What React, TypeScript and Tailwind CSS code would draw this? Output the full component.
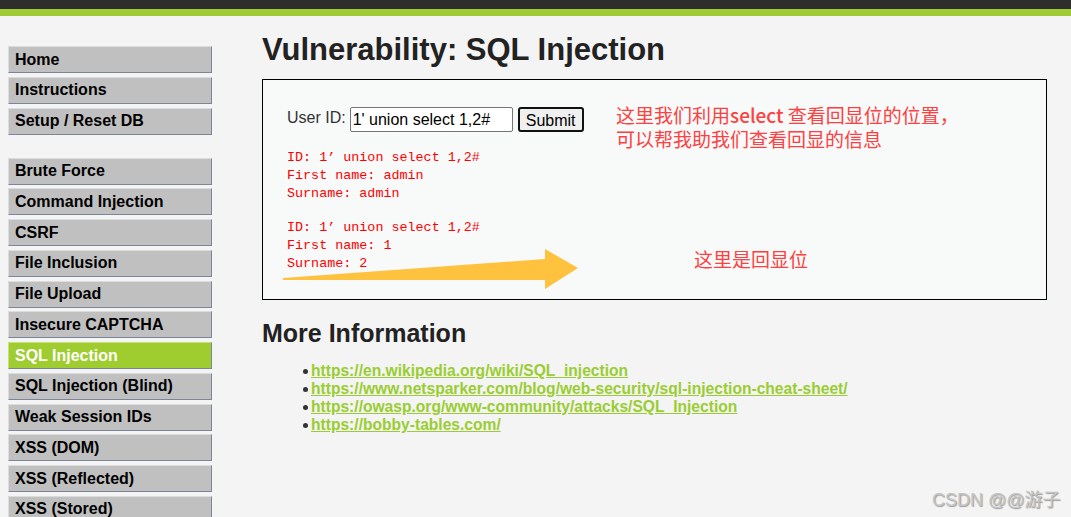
const menuTop = ["Home", "Instructions", "Setup / Reset DB"];
const menuVulns = [
  "Brute Force",
  "Command Injection",
  "CSRF",
  "File Inclusion",
  "File Upload",
  "Insecure CAPTCHA",
  "SQL Injection",
  "SQL Injection (Blind)",
  "Weak Session IDs",
  "XSS (DOM)",
  "XSS (Reflected)",
  "XSS (Stored)",
];

const links = [
  "https://en.wikipedia.org/wiki/SQL_injection",
  "https://www.netsparker.com/blog/web-security/sql-injection-cheat-sheet/",
  "https://owasp.org/www-community/attacks/SQL_Injection",
  "https://bobby-tables.com/",
];

function MenuItem({ label }: { label: string }) {
  const active = label === "SQL Injection";
  return (
    <li
      className={
        active
          ? "h-[27px] mb-[3.75px] pl-[6px] flex items-center border border-t-[#c7e07a] border-l-[#c7e07a] border-b-[#7b8698] border-r-[#7b8698] bg-[#9fcd30] text-white text-[16px] font-bold"
          : "h-[27px] mb-[3.75px] pl-[6px] flex items-center border border-t-[#dcdcdc] border-l-[#dcdcdc] border-b-[#7b8698] border-r-[#7b8698] bg-[#c0c0c0] text-black text-[16px] font-bold"
      }
    >
      {label}
    </li>
  );
}

function Result({ first, last }: { first: string; last: string }) {
  return (
    <pre className="text-[#ff0000] text-[13.4px] leading-[18px] font-['Liberation_Mono','Noto_Sans_CJK_SC',monospace]">
      {"ID: 1’ union select 1,2#\n"}
      {"First name: " + first + "\n"}
      {"Surname: " + last}
    </pre>
  );
}

export default function App() {
  return (
    <div className="relative h-[517px] w-[1071px] overflow-hidden bg-[#f4f4f4] font-['Liberation_Sans',Arial,sans-serif]">
      <div className="h-[9px] bg-[#2e2e2e]" />
      <div className="h-[7px] bg-[#9fcb34]" />

      <div className="flex">
        <div className="w-[212px] pl-[8px] pt-[30px]">
          <ul>
            {menuTop.map((m) => (
              <MenuItem key={m} label={m} />
            ))}
          </ul>
          <ul className="mt-[23px]">
            {menuVulns.map((m) => (
              <MenuItem key={m} label={m} />
            ))}
          </ul>
        </div>

        <div className="ml-[50px] w-[785px]">
          <h1 className="mt-[16px] text-[31px] leading-[36px] font-bold text-[#222]">
            Vulnerability: SQL Injection
          </h1>

          <div className="relative mt-[11px] h-[221px] border border-black bg-[#f8f9f9] pl-[24px] pt-[27px]">
            <div className="flex items-center gap-[4px] text-[16px]">
              <span className="text-[#333] -mt-[3px]">User ID:</span>
              <input
                readOnly
                value="1' union select 1,2#"
                className="h-[25px] w-[163px] rounded-[2px] border border-[#767676] bg-white px-[2px] text-[16px] text-black"
              />
              <button className="ml-[1px] h-[25px] w-[66px] rounded-[3px] border-2 border-[#111] bg-[#efefef] text-[16px] text-black">
                Submit
              </button>
            </div>
            <div className="mt-[17px]">
              <Result first="admin" last="admin" />
            </div>
            <div className="mt-[16px]">
              <Result first="1" last="2" />
            </div>

            <div className="absolute left-[353px] top-[23px] text-[19px] leading-[24px] text-[#ff4040] font-['Noto_Sans_CJK_SC',sans-serif]">
              <p>这里我们利用<span className="font-medium">select</span> 查看回显位的位置，</p>
              <p>可以帮我助我们查看回显的信息</p>
            </div>
            <div className="absolute left-[431px] top-[167px] text-[19px] leading-[24px] text-[#ff4040] font-['Noto_Sans_CJK_SC',sans-serif]">
              这里是回显位
            </div>

            <svg className="absolute left-[20px] top-[167px]" width="300" height="45" viewBox="0 0 300 45">
              <polygon points="0,31 262,12 262,2 295,21 262,42 262,33 0,33" fill="#ffc23f" />
            </svg>
          </div>

          <h2 className="mt-[18px] text-[25px] leading-[30px] font-bold text-[#222]">More Information</h2>
          <ul className="mt-[14px] ml-[41px] text-[15.6px] leading-[18px] font-bold">
            {links.map((l) => (
              <li key={l} className="flex items-center">
                <span className="mr-[3px] h-[5px] w-[5px] rounded-full bg-[#333]" />
                <a className="text-[#9acd32] underline">{l}</a>
              </li>
            ))}
          </ul>
        </div>
      </div>

      <div className="absolute left-[932px] top-[487px] text-[18px] text-[#c4c4c4] font-['Liberation_Sans','Noto_Sans_CJK_SC',sans-serif] [text-shadow:1px_1px_1px_#9a9a9a]">
        CSDN @@游子
      </div>
    </div>
  );
}
